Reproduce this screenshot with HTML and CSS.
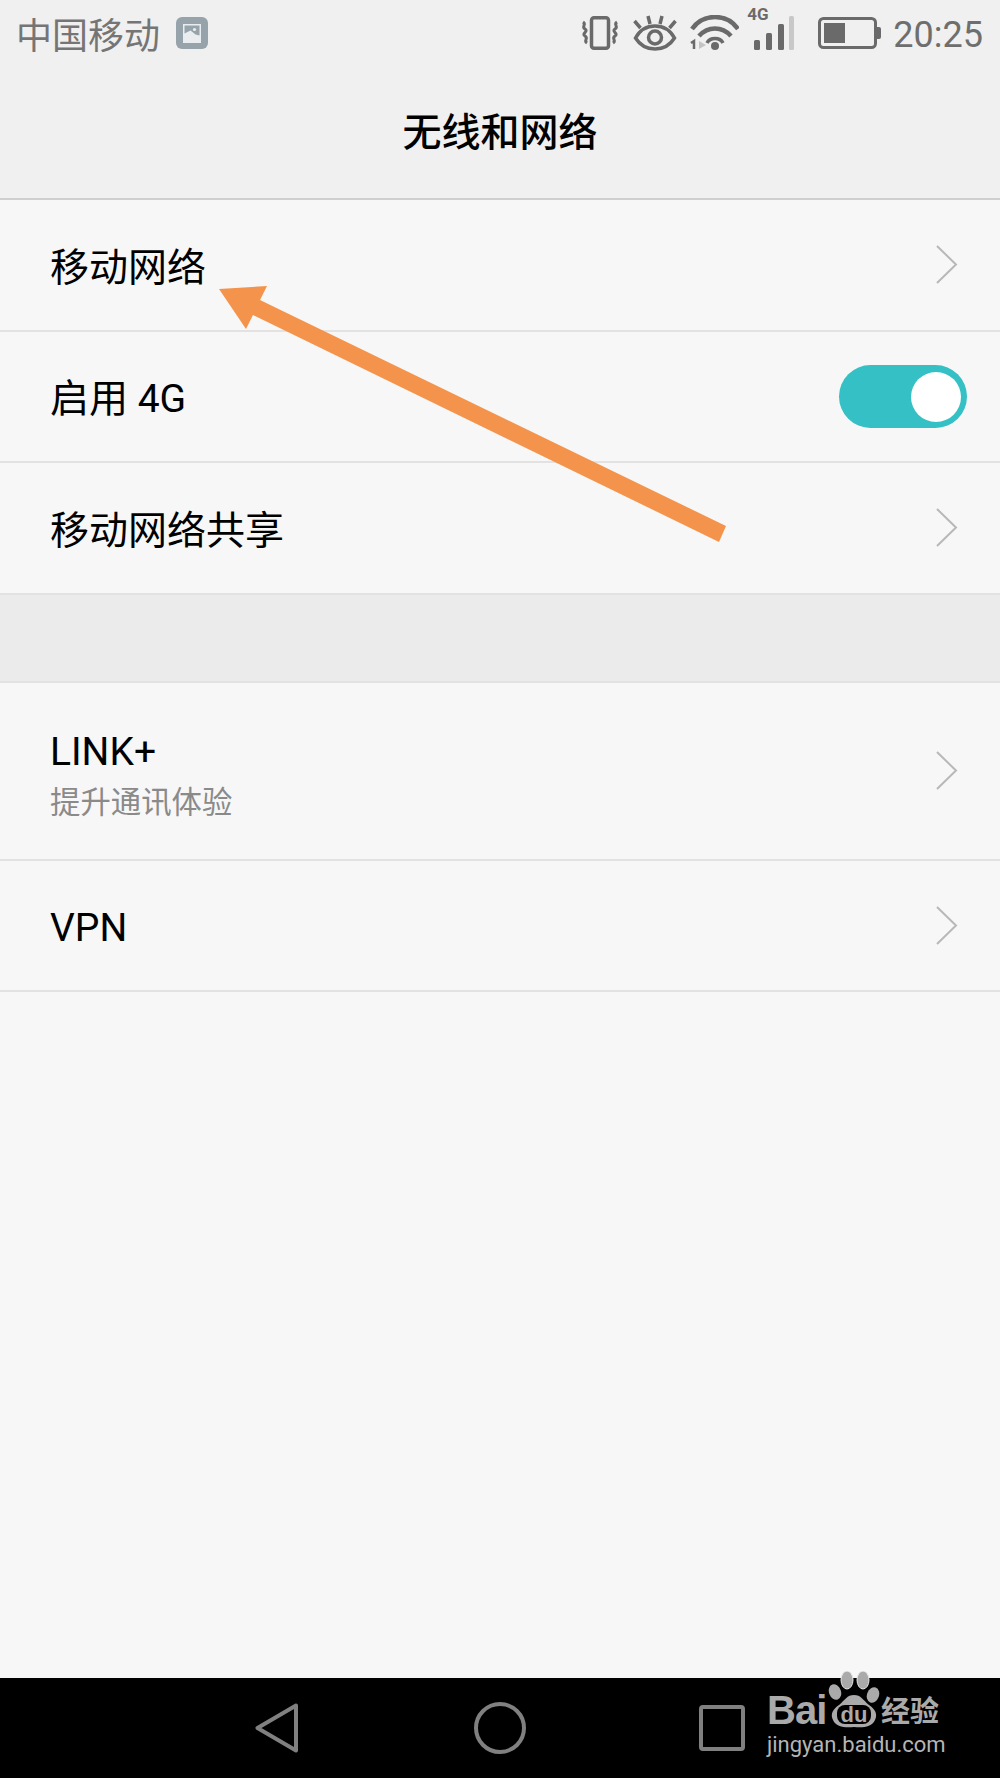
FILE: index.html
```html
<!DOCTYPE html>
<html lang="zh-CN">
<head>
    <meta charset="UTF-8">
    <meta name="viewport" content="width=device-width, initial-scale=1.0">
    <title>无线和网络</title>
    <link rel="stylesheet" href="styles.css">
</head>
<body>
    <div class="phone">
        <header class="header">
            <div class="status-bar">
                <div class="status-left">
                    <span class="carrier">中国移动</span>
                    <svg class="picture-icon" width="32" height="32" viewBox="0 0 32 32">
                        <rect width="32" height="32" rx="6" fill="#97a3ab"/>
                        <rect x="7" y="7" width="18" height="19" fill="#e9edef"/>
                        <path d="M8.500 8.500h15v10l-4-1-5-4-6 3z" fill="#97a3ab"/>
                        <circle cx="18.500" cy="12.500" r="1.600" fill="#e9edef"/>
                    </svg>
                </div>
                <div class="status-right">
                    <svg class="icon-vibrate" width="38" height="34" viewBox="0 0 38 34" fill="none" stroke="#6a6a6a">
                        <rect x="10.500" y="1.750" width="17" height="30.500" rx="2.500" stroke-width="3.500"/>
                        <path d="M2 6c4 2.500-2 4.500 2 7s-4 4.500 0 7-2 4.500 2 7M36 6c-4 2.500 2 4.500-2 7s4 4.500 0 7 2 4.500-2 7" stroke-width="3"/>
                    </svg>
                    <svg class="icon-eye" width="44" height="36" viewBox="0 0 44 36" fill="none" stroke="#6a6a6a" stroke-width="3.500">
                        <path d="M2.500 23c5-9 12-12 19.500-12s14.500 3 19.500 12c-5 8-12 11-19.500 11S7.500 31 2.500 23z"/>
                        <circle cx="22" cy="22.500" r="6.500"/>
                        <path d="M1.500 6l6 7M15 1l2 8M29 1l-2 8M42.500 6l-6 7"/>
                    </svg>
                    <svg class="icon-wifi" width="50" height="36" viewBox="0 0 50 36" fill="none">
                        <path d="M3 14C14 -2 38 -2 49 14" stroke="#6a6a6a" stroke-width="4.500"/>
                        <path d="M10 21c9-10 23-10 32 0" stroke="#6a6a6a" stroke-width="4.500"/>
                        <path d="M18 28c3-6 13-6 16 0" stroke="#6a6a6a" stroke-width="3.500"/>
                        <circle cx="26" cy="31" r="4" fill="#6a6a6a"/>
                        <path d="M2 28l3-2v8" stroke="#6a6a6a" stroke-width="2.500"/>
                        <path d="M10 26l7 4-7 4z" fill="#c4c4c4"/>
                    </svg>
                    <div class="signal">
                        <span class="signal-type">4G</span>
                        <svg width="46" height="36" viewBox="0 0 46 36">
                            <rect x="5" y="25" width="6" height="10" rx="1.500" fill="#6a6a6a"/>
                            <rect x="17" y="18" width="6" height="17" rx="1.500" fill="#6a6a6a"/>
                            <rect x="29" y="9" width="6" height="26" rx="1.500" fill="#6a6a6a"/>
                            <rect x="40" y="1" width="5" height="34" rx="1.500" fill="#c8c8c8"/>
                        </svg>
                    </div>
                    <svg class="battery" width="63" height="32" viewBox="0 0 63 32" fill="none">
                        <rect x="1.500" y="1.500" width="56" height="29" rx="4" stroke="#6a6a6a" stroke-width="3"/>
                        <rect x="6" y="6" width="21" height="20" fill="#6a6a6a"/>
                        <path d="M59 10h2a2 2 0 0 1 2 2v8a2 2 0 0 1-2 2h-2z" fill="#6a6a6a"/>
                    </svg>
                    <span class="clock">20:25</span>
                </div>
            </div>
            <h1 class="title">无线和网络</h1>
        </header>

        <main class="content">
            <div class="row">
                <span class="row-label">移动网络</span>
                <svg class="chevron" width="22" height="39" viewBox="0 0 22 39" fill="none"><path d="M1 1l19 18.500L1 38" stroke="#b8b8b8" stroke-width="2"/></svg>
            </div>
            <div class="row">
                <span class="row-label">启用 4G</span>
                <div class="toggle"><span class="toggle-knob"></span></div>
            </div>
            <div class="row">
                <span class="row-label">移动网络共享</span>
                <svg class="chevron" width="22" height="39" viewBox="0 0 22 39" fill="none"><path d="M1 1l19 18.500L1 38" stroke="#b8b8b8" stroke-width="2"/></svg>
            </div>
            <div class="section-gap"></div>
            <div class="row row-tall">
                <div class="row-text">
                    <span class="row-label">LINK+</span>
                    <span class="row-sub">提升通讯体验</span>
                </div>
                <svg class="chevron" width="22" height="39" viewBox="0 0 22 39" fill="none"><path d="M1 1l19 18.500L1 38" stroke="#b8b8b8" stroke-width="2"/></svg>
            </div>
            <div class="row">
                <span class="row-label">VPN</span>
                <svg class="chevron" width="22" height="39" viewBox="0 0 22 39" fill="none"><path d="M1 1l19 18.500L1 38" stroke="#b8b8b8" stroke-width="2"/></svg>
            </div>
        </main>

        <nav class="nav-bar">
            <svg width="44" height="50" viewBox="0 0 44 50" fill="none"><path d="M41 2.500 2.500 25 41 47.500z" stroke="#808080" stroke-width="4" stroke-linejoin="round"/></svg>
            <svg class="nav-home" width="52" height="52" viewBox="0 0 52 52" fill="none"><circle cx="26" cy="26" r="24" stroke="#808080" stroke-width="4"/></svg>
            <svg width="46" height="46" viewBox="0 0 46 46" fill="none"><rect x="2" y="2" width="42" height="42" rx="2" stroke="#808080" stroke-width="4"/></svg>
        </nav>

        <!-- arrow drawn on top of the screenshot -->
        <svg class="arrow" width="1000" height="1778" viewBox="0 0 1000 1778">
            <path d="M219 289 267 286 260 300 726 526 719 542 253 315 246 329z" fill="#f4944c"/>
        </svg>

        <div class="watermark">
            <div class="wm-top">
                <span class="wm-bai">Bai</span>
                <svg class="wm-paw" width="54" height="58" viewBox="0 0 54 58">
                    <ellipse cx="20" cy="9" rx="6" ry="9" fill="#aaa" stroke="#e8e8e8" stroke-width="1"/>
                    <ellipse cx="36" cy="9" rx="6" ry="9" fill="#aaa" stroke="#e8e8e8" stroke-width="1"/>
                    <ellipse cx="8" cy="21" rx="6" ry="8" fill="#aaa" transform="rotate(-20 8 21)"/>
                    <ellipse cx="46" cy="24" rx="6" ry="8" fill="#aaa" transform="rotate(20 46 24)"/>
                    <path d="M27 24c7 0 9 5 15 10 6 4 9 9 6 15-3 7-12 8-21 7-9 1-18 0-21-7-3-6 0-11 6-15 6-5 8-10 15-10z" fill="#aaa"/>
                    <rect x="10" y="34" width="34" height="19" rx="8" fill="#000"/>
                    <text class="wm-du" x="27" y="51" text-anchor="middle">du</text>
                </svg>
                <span class="wm-cn">经验</span>
            </div>
            <div class="wm-url">jingyan.baidu.com</div>
        </div>
    </div>
</body>
</html>
```

FILE: styles.css
```css
* { box-sizing: border-box; }
body { margin: 0; font-family: Roboto, "Noto Sans CJK SC", sans-serif; background-color: #f7f7f7; }
.phone { position: relative; width: 1000px; height: 1778px; display: flex; flex-direction: column; overflow: hidden; }

.header { height: 200px; background-color: #f0f0f0; border-bottom: 2px solid #cfcfcf; }
.status-bar { height: 66px; padding: 0 17px 0 16px; display: flex; justify-content: space-between; align-items: center; }
.status-left { display: flex; align-items: center; gap: 16px; }
.carrier { font-size: 36px; color: #757575; }
.status-right { display: flex; align-items: center; gap: 12px; }
.icon-eye { margin-left: 2px; }
.signal { position: relative; margin-left: -2px; margin-right: 11px; }
.signal svg { display: block; }
.signal-type { position: absolute; left: -2px; top: -9px; font-size: 17px; font-weight: 700; line-height: 17px; color: #6a6a6a; }
.clock { font-size: 36px; color: #6e6e6e; padding-top: 3px; }
.title { margin: 0; height: 132px; padding-top: 1px; line-height: 132px; text-align: center; font-size: 39px; font-weight: 500; color: #000; }

.content { flex: 1; }
.row { height: 131.5px; padding: 0 33px 0 50px; display: flex; justify-content: space-between; align-items: center; border-bottom: 2px solid #e2e2e2; }
.row-tall { height: 178px; }
.row-text { display: flex; flex-direction: column; gap: 7px; padding-top: 3px; }
.row-label { font-size: 39px; line-height: 48px; padding-top: 6px; color: #000; }
.row-sub { font-size: 30.4px; line-height: 40px; color: #8a8a8a; }
.chevron { margin-right: 9px; }
.section-gap { height: 88px; background-color: #ebebeb; border-bottom: 2px solid #e2e2e2; }

.toggle { width: 128px; height: 63px; padding: 7px 6px; display: flex; justify-content: flex-end; background-color: #34c0c4; border-radius: 32px; }
.toggle-knob { width: 50px; height: 50px; background-color: #fff; border-radius: 50%; }

.nav-bar { height: 100px; background-color: #000; display: flex; justify-content: center; align-items: center; gap: 174px; }
.nav-home { margin-left: 1px; margin-right: -1px; }

.arrow { position: absolute; left: 0; top: 0; pointer-events: none; }

.watermark { position: absolute; left: 767px; top: 1672px; width: 180px; color: #aaa; }
.wm-top { display: flex; align-items: flex-end; height: 56px; }
.wm-bai { font-family: "Liberation Sans", sans-serif; font-size: 40px; font-weight: 700; line-height: 40px; width: 60px; letter-spacing: -1px; margin-bottom: -2px; }
.wm-paw { flex: none; margin-bottom: -1px; }
.wm-cn { font-size: 29px; font-weight: 700; line-height: 32px; }
.wm-du { font-family: "Liberation Sans", sans-serif; font-size: 22px; font-weight: 700; fill: #aaa; }
.wm-url { margin-top: 3px; font-size: 22px; line-height: 28px; color: #b5b5b5; }
```
